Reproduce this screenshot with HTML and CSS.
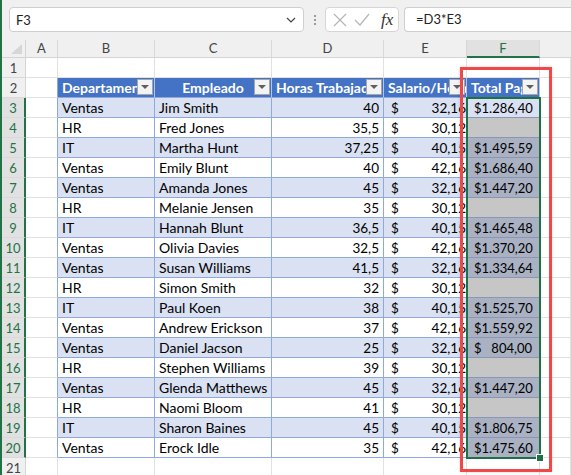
FILE: index.html
```html
<!DOCTYPE html>
<html lang="es">
<head>
    <meta charset="UTF-8">
    <title>Total Pago</title>
    <link rel="stylesheet" href="styles.css">
</head>
<body>
<div class="app">
    <!-- Barra de fórmulas -->
    <div class="formula-bar">
        <div class="name-box">
            <span>F3</span>
            <svg class="chevron" width="10" height="6" viewBox="0 0 10 6"><path d="M1 1 L5 5 L9 1" fill="none" stroke="#444" stroke-width="1.2"/></svg>
        </div>
        <div class="grip"><i></i><i></i><i></i></div>
        <div class="fx-box">
            <svg width="14" height="14" viewBox="0 0 14 14"><path d="M1 1 L13 13 M13 1 L1 13" stroke="#b5b5b5" stroke-width="1.2"/></svg>
            <svg width="16" height="14" viewBox="0 0 16 14"><path d="M1 7 L6 12 L15 1" fill="none" stroke="#b5b5b5" stroke-width="1.2"/></svg>
            <span class="fx">fx</span>
        </div>
        <div class="formula">=D3*E3</div>
    </div>

    <!-- Hoja -->
    <div class="sheet">
        <div class="row col-head">
            <div class="corner"></div>
            <div class="ch">A</div><div class="ch">B</div><div class="ch">C</div><div class="ch">D</div><div class="ch">E</div><div class="ch cur">F</div><div class="ch last"></div>
        </div>
        <div class="row">
            <div class="rh">1</div>
            <div class="c"></div><div class="c"></div><div class="c"></div><div class="c"></div><div class="c"></div><div class="c"></div><div class="c"></div>
        </div>
        <div class="row head">
            <div class="rh">2</div>
            <div class="c a"></div>
            <div class="c th">Departamen<b class="filter"></b></div>
            <div class="c th mid">Empleado<b class="filter"></b></div>
            <div class="c th">Horas Trabajadas<b class="filter"></b></div>
            <div class="c th">Salario/Hora<b class="filter"></b></div>
            <div class="c th">Total Pago<b class="filter"></b></div>
            <div class="c g"></div>
        </div>
        <div class="row tbl sel band">
            <div class="rh">3</div><div class="c a"></div>
            <div class="c t">Ventas</div><div class="c t">Jim Smith</div><div class="c t n">40</div>
            <div class="c t acc"><span>$</span>32,16</div><div class="c t acc f active"><span>$</span>1.286,40</div><div class="c g"></div>
        </div>
        <div class="row tbl sel">
            <div class="rh">4</div><div class="c a"></div>
            <div class="c t">HR</div><div class="c t">Fred Jones</div><div class="c t n">35,5</div>
            <div class="c t acc"><span>$</span>30,12</div><div class="c t acc f empty"></div><div class="c g"></div>
        </div>
        <div class="row tbl sel band">
            <div class="rh">5</div><div class="c a"></div>
            <div class="c t">IT</div><div class="c t">Martha Hunt</div><div class="c t n">37,25</div>
            <div class="c t acc"><span>$</span>40,15</div><div class="c t acc f"><span>$</span>1.495,59</div><div class="c g"></div>
        </div>
        <div class="row tbl sel">
            <div class="rh">6</div><div class="c a"></div>
            <div class="c t">Ventas</div><div class="c t">Emily Blunt</div><div class="c t n">40</div>
            <div class="c t acc"><span>$</span>42,16</div><div class="c t acc f"><span>$</span>1.686,40</div><div class="c g"></div>
        </div>
        <div class="row tbl sel band">
            <div class="rh">7</div><div class="c a"></div>
            <div class="c t">Ventas</div><div class="c t">Amanda Jones</div><div class="c t n">45</div>
            <div class="c t acc"><span>$</span>32,16</div><div class="c t acc f"><span>$</span>1.447,20</div><div class="c g"></div>
        </div>
        <div class="row tbl sel">
            <div class="rh">8</div><div class="c a"></div>
            <div class="c t">HR</div><div class="c t">Melanie Jensen</div><div class="c t n">35</div>
            <div class="c t acc"><span>$</span>30,12</div><div class="c t acc f empty"></div><div class="c g"></div>
        </div>
        <div class="row tbl sel band">
            <div class="rh">9</div><div class="c a"></div>
            <div class="c t">IT</div><div class="c t">Hannah Blunt</div><div class="c t n">36,5</div>
            <div class="c t acc"><span>$</span>40,15</div><div class="c t acc f"><span>$</span>1.465,48</div><div class="c g"></div>
        </div>
        <div class="row tbl sel">
            <div class="rh">10</div><div class="c a"></div>
            <div class="c t">Ventas</div><div class="c t">Olivia Davies</div><div class="c t n">32,5</div>
            <div class="c t acc"><span>$</span>42,16</div><div class="c t acc f"><span>$</span>1.370,20</div><div class="c g"></div>
        </div>
        <div class="row tbl sel band">
            <div class="rh">11</div><div class="c a"></div>
            <div class="c t">Ventas</div><div class="c t">Susan Williams</div><div class="c t n">41,5</div>
            <div class="c t acc"><span>$</span>32,16</div><div class="c t acc f"><span>$</span>1.334,64</div><div class="c g"></div>
        </div>
        <div class="row tbl sel">
            <div class="rh">12</div><div class="c a"></div>
            <div class="c t">HR</div><div class="c t">Simon Smith</div><div class="c t n">32</div>
            <div class="c t acc"><span>$</span>30,12</div><div class="c t acc f empty"></div><div class="c g"></div>
        </div>
        <div class="row tbl sel band">
            <div class="rh">13</div><div class="c a"></div>
            <div class="c t">IT</div><div class="c t">Paul Koen</div><div class="c t n">38</div>
            <div class="c t acc"><span>$</span>40,15</div><div class="c t acc f"><span>$</span>1.525,70</div><div class="c g"></div>
        </div>
        <div class="row tbl sel">
            <div class="rh">14</div><div class="c a"></div>
            <div class="c t">Ventas</div><div class="c t">Andrew Erickson</div><div class="c t n">37</div>
            <div class="c t acc"><span>$</span>42,16</div><div class="c t acc f"><span>$</span>1.559,92</div><div class="c g"></div>
        </div>
        <div class="row tbl sel band">
            <div class="rh">15</div><div class="c a"></div>
            <div class="c t">Ventas</div><div class="c t">Daniel Jacson</div><div class="c t n">25</div>
            <div class="c t acc"><span>$</span>32,16</div><div class="c t acc f"><span>$</span>804,00</div><div class="c g"></div>
        </div>
        <div class="row tbl sel">
            <div class="rh">16</div><div class="c a"></div>
            <div class="c t">HR</div><div class="c t">Stephen Williams</div><div class="c t n">39</div>
            <div class="c t acc"><span>$</span>30,12</div><div class="c t acc f empty"></div><div class="c g"></div>
        </div>
        <div class="row tbl sel band">
            <div class="rh">17</div><div class="c a"></div>
            <div class="c t">Ventas</div><div class="c t">Glenda Matthews</div><div class="c t n">45</div>
            <div class="c t acc"><span>$</span>32,16</div><div class="c t acc f"><span>$</span>1.447,20</div><div class="c g"></div>
        </div>
        <div class="row tbl sel">
            <div class="rh">18</div><div class="c a"></div>
            <div class="c t">HR</div><div class="c t">Naomi Bloom</div><div class="c t n">41</div>
            <div class="c t acc"><span>$</span>30,12</div><div class="c t acc f empty"></div><div class="c g"></div>
        </div>
        <div class="row tbl sel band">
            <div class="rh">19</div><div class="c a"></div>
            <div class="c t">IT</div><div class="c t">Sharon Baines</div><div class="c t n">45</div>
            <div class="c t acc"><span>$</span>40,15</div><div class="c t acc f"><span>$</span>1.806,75</div><div class="c g"></div>
        </div>
        <div class="row tbl sel">
            <div class="rh">20</div><div class="c a"></div>
            <div class="c t">Ventas</div><div class="c t">Erock Idle</div><div class="c t n">35</div>
            <div class="c t acc"><span>$</span>42,16</div><div class="c t acc f"><span>$</span>1.475,60</div><div class="c g"></div>
        </div>
        <div class="row">
            <div class="rh">21</div>
            <div class="c"></div><div class="c"></div><div class="c"></div><div class="c"></div><div class="c"></div><div class="c"></div><div class="c"></div>
        </div>

        <!-- Selección F3:F20 y marca roja -->
        <div class="selection"><i class="handle"></i></div>
        <div class="highlight"></div>
    </div>
</div>
</body>
</html>
```

FILE: styles.css
```css
body {
    margin: 0;
    font-family: Lato, "Liberation Sans", sans-serif;
    background: #fff;
}
.app {
    height: 475px;
    overflow: hidden;
    border-left: 2px solid #217346;
    background: #fff;
}

/* Barra de fórmulas */
.formula-bar {
    height: 40px;
    background: #f0f0f0;
    display: flex;
    align-items: flex-start;
    padding-top: 7px;
    box-sizing: border-box;
    font-size: 13px;
    color: #222;
}
.name-box {
    margin-left: 7px;
    width: 295px;
    height: 25px;
    box-sizing: border-box;
    background: #fff;
    border: 1px solid #cfcfcf;
    border-radius: 4px;
    display: flex;
    align-items: center;
    justify-content: space-between;
    padding: 0 7px 0 6px;
}
.grip {
    width: 21px;
    height: 25px;
    display: flex;
    flex-direction: column;
    align-items: center;
    justify-content: center;
    gap: 2px;
}
.grip i {
    width: 2px;
    height: 2px;
    background: #9a9a9a;
}
.fx-box {
    width: 74px;
    height: 25px;
    box-sizing: border-box;
    background: #fff;
    border: 1px solid #d6d6d6;
    border-radius: 4px;
    display: flex;
    align-items: center;
    gap: 7px;
    padding-left: 7px;
}
.fx {
    font-family: "Liberation Serif", serif;
    font-style: italic;
    font-size: 17px;
    color: #333;
    margin-left: 4px;
}
.formula {
    margin-left: 5px;
    flex: 1;
    height: 25px;
    line-height: 23px;
    box-sizing: border-box;
    background: #fff;
    border: 1px solid #cfcfcf;
    border-right: none;
    border-radius: 4px 0 0 4px;
    padding-left: 11px;
}

/* Hoja */
.sheet {
    position: relative;
}
.row {
    display: grid;
    grid-template-columns: 24px 32px 97px 117px 112px 83px 73px 1fr;
    height: 20px;
    font-size: 14px;
}
.row > div {
    box-sizing: border-box;
    overflow: hidden;
    white-space: nowrap;
    line-height: 20px;
}
.col-head {
    height: 18px;
    background: #f0f0f0;
}
.corner {
    position: relative;
    border-right: 1px solid #d4d4d4;
    border-bottom: 1px solid #d4d4d4;
}
.corner::after {
    content: "";
    position: absolute;
    right: 3px;
    bottom: 3px;
    border-left: 11px solid transparent;
    border-bottom: 10px solid #d6d6d6;
}
.ch {
    text-align: center;
    font-size: 13px;
    line-height: 17px !important;
    color: #444;
    border-right: 1px solid #d8d8d8;
    border-bottom: 1px solid #d4d4d4;
}
.ch.cur {
    background: #e1e1e1;
    color: #217346;
    border-bottom: 2px solid #217346;
}
.ch.last {
    border-right: none;
}
.rh {
    background: #f0f0f0;
    color: #444;
    font-size: 13px;
    text-align: center;
    border-right: 1px solid #d4d4d4;
    border-bottom: 1px solid #d9d9d9;
}
.sel .rh {
    background: #e1e1e1;
    color: #217346;
    border-right: 2px solid #217346;
}
.c {
    border-right: 1px solid #e1e1e1;
    border-bottom: 1px solid #e1e1e1;
}

/* Tabla */
.head .a,
.tbl .a {
    border-right-color: #8ea9db;
}
.th {
    position: relative;
    background: #4472c4;
    color: #fff;
    font-weight: bold;
    padding-left: 4px;
    border-right-color: #b4c6e7;
    border-bottom-color: #8ea9db;
}
.th.mid {
    text-align: center;
    padding-right: 16px;
    padding-left: 16px;
}
.filter {
    position: absolute;
    right: 1px;
    top: 1px;
    width: 16px;
    height: 16px;
    box-sizing: border-box;
    background: #f3f3f3;
    border: 1px solid #a6a6a6;
}
.filter::after {
    content: "";
    position: absolute;
    left: 3px;
    top: 5px;
    border-left: 4px solid transparent;
    border-right: 4px solid transparent;
    border-top: 4px solid #5f5f5f;
}
.t {
    border-right-color: #8ea9db;
    border-bottom-color: #8ea9db;
    padding: 0 4px;
}
.band .t {
    background: #d9e1f2;
}
.n {
    text-align: right;
    font-size: 13.5px;
}
.acc {
    text-align: right;
    font-size: 13.5px;
    padding: 0 0 0 7px;
}
.acc span {
    float: left;
}
.f {
    font-size: 13px;
    padding: 0 7px 0 7px;
    background: #a9b1c2 !important;
    border-bottom-color: #8a97b4;
}
.f.empty {
    background: #c6c6c6 !important;
}
.f.active {
    background: #d9e1f2 !important;
}
.g {
    border-bottom-color: #e1e1e1;
}

/* Selección y marca */
.selection {
    position: absolute;
    left: 464px;
    top: 57px;
    width: 75px;
    height: 362px;
    box-sizing: border-box;
    border: 2px solid #1e7145;
}
.handle {
    position: absolute;
    right: -5px;
    bottom: -5px;
    width: 6px;
    height: 6px;
    background: #1e7145;
    border: 1px solid #fff;
}
.highlight {
    position: absolute;
    left: 458px;
    top: 27px;
    width: 92px;
    height: 405px;
    box-sizing: border-box;
    border: 3px solid #f04848;
    box-shadow: 0 0 3px rgba(0, 0, 0, 0.15);
}
```
